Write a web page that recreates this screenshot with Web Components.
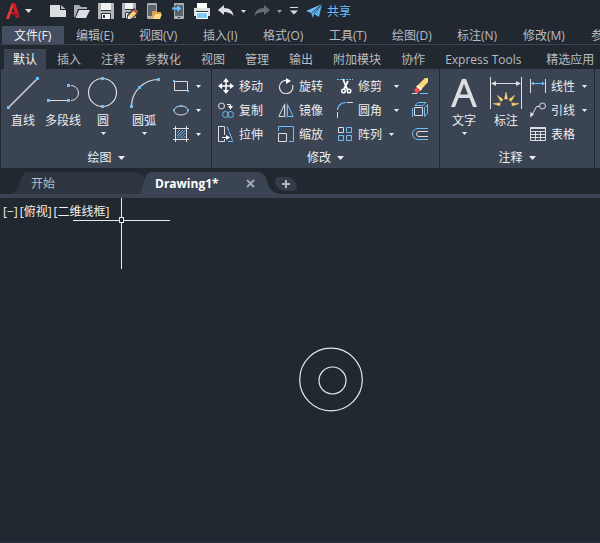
<!DOCTYPE html>
<html lang="zh-CN">
<head>
<meta charset="utf-8">
<title>Drawing1</title>
<style>
html, body { height: 100%; margin: 0; }
body { background: #212830; }
</style>
</head>
<body>
<cad-app></cad-app>
<script>
const W = '#dcdde0', B = '#6cbdf8', Y = '#ffcf70';
const sq = (x, y) => `<rect x="${x - 1.5}" y="${y - 1.5}" width="3" height="3" fill="${B}"/>`;
const ray = (a) => `<path d="M14.500 22L16 15L17.500 22Z" fill="${Y}" stroke="${Y}" stroke-width=".5" transform="rotate(${a} 16 28)"/>`;
const ICONS = {
  logo: [18, 18, `<path d="M2 17L8 1H11L16 15L12 16L11 12H6L5 17Z" fill="#c8202b"/><path d="M9 5L7 10H10.500Z" fill="#212830"/><path d="M2 17L8 1L9 5L5 17Z" fill="#e23b3b"/><path d="M6 12L12 11L16 15L11 14Z" fill="#8f1620"/>`],
  caret: [7, 4, `<path d="M0 0H7L3.500 4Z" fill="currentColor"/>`],
  minicaret: [5, 3, `<path d="M0 0H5L2.500 3Z" fill="currentColor"/>`],
  custom: [8, 8, `<path d="M0 .500H8" stroke="#dcdde0"/><path d="M0 3.500H8L4 7.500Z" fill="#dcdde0"/>`],
  new: [16, 16, `<path d="M0 2H10V7H16V14H0Z" fill="${W}"/><path d="M11 2L15.500 6H11Z" fill="#b5b8bc"/>`],
  open: [16, 16, `<path d="M0 2H5L7 4H13V6H4L1 14H0Z" fill="#a9adb2"/><path d="M5 7H16L12 15H1.500Z" fill="${W}"/>`],
  save: [16, 16, `<path d="M0 0H16V16H0Z" fill="#b1b5ba"/><path d="M3 0H13V7H3ZM4 10H12V16H4Z" fill="#f1f1f2"/><path d="M3 7.500H13M3.500 16V10.500H12.500V16" stroke="#30363e" fill="none"/><path d="M5 12H7V15H5Z" fill="#30363e"/>`],
  saveas: [16, 16, `<path d="M0 0H14V15H0Z" fill="#b1b5ba"/><path d="M3 0H11V6H3ZM3 9H9V15H3Z" fill="#f1f1f2"/><path d="M3 6.500H11M3.500 15V9.500H10" stroke="#30363e" fill="none"/><path d="M12 5L16 8V11L10 16H5V12Z" fill="#30363e"/><path d="M11.500 7.500L14.500 10.500L9.500 15.500L6.500 12.500Z" fill="${Y}"/><path d="M12 7L13.500 6L16 8.500L15 10Z" fill="#ec5a55"/><path d="M6.500 12.500L9.500 15.500L5.500 16Z" fill="#fff"/>`],
  mobileopen: [16, 16, `<rect x="1" y="0" width="10" height="16" rx="1" fill="#aeb2b7"/><path d="M2 2H10V13H2Z" fill="#5e656e"/><path d="M6 8H10L11 9H15V11H9L7 16H6Z" fill="#d8a648"/><path d="M9 11H16L14 16H6.500Z" fill="#ffda89"/>`],
  mobilesave: [16, 16, `<rect x="4" y="0" width="10" height="16" rx="1" fill="#aeb2b7"/><path d="M5 2H13V13H5Z" fill="#5e656e"/><path d="M8 14.500H10" stroke="#30363e"/><path d="M2 4H7V1L12 5.500L7 10V7H2Z" fill="${B}" stroke="#212830" stroke-width=".5"/>`],
  print: [16, 16, `<path d="M3 0H13V5H3Z" fill="#fff"/><path d="M0 5H16V13H0Z" fill="#dfe0e2"/><path d="M0 4.500H3M13 4.500H16M2 8.500H14" stroke="#30363e"/><path d="M2.500 9.500H13.500V15.500H2.500Z" fill="#84c8fa" stroke="#fff"/>`],
  undo: [16, 12, `<path d="M0 5L6 0V3C12 3 15 6 15.500 11C13 8 10 7 6 7V10Z" fill="currentColor"/>`],
  redo: [16, 12, `<path d="M16 5L10 0V3C4 3 1 6 .500 11C3 8 6 7 10 7V10Z" fill="currentColor"/>`],
  share: [16, 16, `<path d="M0 8L16 1L5.500 10Z" fill="${B}"/><path d="M16 1L13 14L8 11L7 15L5 10Z" fill="#5fb2ee"/><path d="M5.500 10L15.500 1.500L8 11" fill="none" stroke="#212830" stroke-width=".7"/>`],
  line: [32, 32, `<path d="M2 30L30 2" stroke="${W}" stroke-width="1.200"/>${sq(1.5, 30.5)}${sq(30.5, 1.5)}`],
  pline: [32, 32, `<path d="M3 23.500H20M24 23.500A7.500 7.500 0 0 0 24 8.500" stroke="${W}" fill="none"/>${sq(1.5, 23.5)}${sq(21.5, 23.5)}${sq(21.5, 8.5)}`],
  circle: [32, 32, `<circle cx="15.500" cy="15.500" r="14" stroke="${W}" fill="none" stroke-width="1.200"/>${sq(15.5, 1.5)}${sq(15.5, 29.5)}`],
  arc: [32, 32, `<path d="M3.500 29.500A27 27 0 0 1 30.500 2.500" stroke="${W}" fill="none" stroke-width="1.200"/>${sq(3.5, 29.5)}${sq(11.5, 10.5)}${sq(30.5, 2.5)}`],
  text: [32, 32, `<path d="M3 30L14 2H18L29 30H25L21.500 21H10.500L7 30ZM12 17.500H20L16 7Z" fill="${W}" fill-rule="evenodd"/>`],
  dim: [32, 32, `<path d="M.500 0V32M31.500 0V32M2 6.500H30" stroke="${W}"/><path d="M1 6.500L6 4V9ZM31 6.500L26 4V9Z" fill="${W}"/><g>${ray(0)}${ray(-42)}${ray(42)}${ray(-84)}${ray(84)}</g>`],
  rect: [16, 16, `<path d="M1.500 3.500H14.500V12.500H1.500Z" stroke="${W}" fill="none"/><path d="M0 2H2V4H0ZM14 12H16V14H14Z" fill="${B}"/>`],
  ellipse: [16, 16, `<ellipse cx="8" cy="8.500" rx="7" ry="4.500" stroke="${W}" fill="none"/><path d="M0 7H2V9H0ZM14 7H16V9H14ZM7 3H9V5H7Z" fill="${B}"/>`],
  hatch: [16, 16, `<path d="M0 2.500H16M0 13.500H16M2.500 0V16M13.500 0V16" stroke="${W}"/><path d="M4 7L7 4M4 10L10 4M4 12.500L12.500 4M7 12.500L12.500 7M10 12.500L12.500 10" stroke="${B}"/>`],
  move: [16, 16, `<path d="M8 2V14M2 8H14" stroke="#fff" stroke-width="1.500"/><path d="M8 0L11 4H5ZM8 16L5 12H11ZM0 8L4 5V11ZM16 8L12 11V5Z" fill="#fff"/>`],
  copy: [16, 16, `<circle cx="3.500" cy="4" r="3" stroke="${W}" fill="none"/><path d="M9 2.500H12.500V5" stroke="#fff" fill="none"/><path d="M10 4H15L12.500 7.500Z" fill="#fff"/><circle cx="7.500" cy="12.500" r="3" stroke="${B}" fill="none"/><circle cx="12.500" cy="12.500" r="3" stroke="${B}" fill="none"/>`],
  stretch: [16, 16, `<path d="M6.500 9V.500H.500V15.500H6.500V13" stroke="${W}" fill="none"/><path d="M9 .500L15 15.500H9" stroke="${B}" fill="none" stroke-dasharray="5 1 9 1"/><path d="M4 11.500H9" stroke="#fff"/><path d="M8 9L12 11.500L8 14Z" fill="#fff"/>`],
  rotate: [16, 16, `<path d="M10 2.600A6.700 6.700 0 1 0 14.500 7" stroke="${W}" fill="none" stroke-width="1.200"/><path d="M8 0L13 3L8 6Z" fill="#fff"/>`],
  mirror: [16, 16, `<path d="M6.500 2.500V14.500H.800Z" stroke="${W}" fill="none"/><path d="M9.500 2.500V14.500H15.200Z" stroke="${B}" fill="none"/><path d="M8 1V16" stroke="${B}" stroke-width=".6"/>`],
  scale: [16, 16, `<path d="M.500 5V.500H15.500V15.500H11" stroke="${B}" fill="none"/><path d="M.500 7.500H8.500V15.500H.500Z" stroke="${W}" fill="none"/>`],
  trim: [16, 16, `<path d="M0 1.500H16" stroke="${B}" stroke-dasharray="2 1"/><path d="M6 1L10 11M11 3L7 11" stroke="#fff" stroke-width="1.800"/><circle cx="6.500" cy="13" r="1.800" stroke="#fff" fill="none" stroke-width="1.500"/><circle cx="12" cy="13" r="1.800" stroke="#fff" fill="none" stroke-width="1.500"/><path d="M9 9L11 12" stroke="#fff" stroke-width="1.500"/>`],
  fillet: [16, 16, `<path d="M.500 8C.500 4 4 .500 9 .500" stroke="${B}" fill="none" stroke-width="1.200"/><path d="M10 .500H16M.500 10V16" stroke="${W}"/>`],
  array: [16, 16, `<path d="M1.500 1.500H6.500V6.500H1.500Z" stroke="${W}" fill="none"/><path d="M9.500 1.500H14.500V6.500H9.500ZM1.500 9.500H6.500V14.500H1.500ZM9.500 9.500H14.500V14.500H9.500Z" stroke="${B}" fill="none"/>`],
  erase: [16, 16, `<path d="M13 0H16V4L8 13L4 9Z" fill="#ffd779"/><path d="M6 7L10 11L8.500 12.500L4.500 8.500Z" fill="#fff"/><path d="M5 9L8 12L6 15H4L2 12Z" fill="#ee4e4e"/><path d="M0 15.500H5" stroke="${W}"/><path d="M8 15.500H16" stroke="${B}"/>`],
  explode: [16, 16, `<path d="M2.500 5.500H10.500V13.500H2.500Z" stroke="${W}" fill="none"/><path d="M.500 6V15M3 3.500L6 .500H14L11 3.500ZM12.500 5.500L15.500 2.500V11L12.500 14.500Z" stroke="${B}" fill="none"/>`],
  offset: [16, 16, `<path d="M16 2.500H6A5.500 5.500 0 0 0 6 13.500H16" stroke="${B}" fill="none"/><path d="M16 5.500H7A2.500 2.500 0 0 0 7 10.500H16" stroke="${W}" fill="none"/>`],
  linear: [16, 16, `<path d="M.500 1V15M15.500 1V15" stroke="${W}"/><path d="M2 5.500H14" stroke="${B}"/><path d="M1 5.500L4 3.500V7.500ZM15 5.500L12 3.500V7.500Z" fill="${B}"/>`],
  leader: [16, 16, `<circle cx="12.500" cy="4" r="3" stroke="${W}" fill="none"/><path d="M9.500 4.500H6.500L2 13" stroke="${W}" fill="none"/><path d="M0 15.500L.500 10L4 12.500Z" fill="${W}"/>`],
  table: [16, 16, `<path d="M.500 1.500H15.500V14.500H.500ZM0 2.500H16M0 5.500H16M0 8.500H16M0 11.500H16M5.500 5V15M10.500 5V15" stroke="${W}" fill="none"/>`],
  close: [9, 9, `<path d="M1 1L8 8M8 1L1 8" stroke="#a4a9b0" stroke-width="2"/>`],
  plus: [8, 8, `<path d="M4 0V8M0 4H8" stroke="#b4b8be" stroke-width="2"/>`]
};

const RESET = `
  button { font: inherit; color: inherit; background: none; border: 0; padding: 0; margin: 0; white-space: nowrap; }
  :host { box-sizing: border-box; }`;

class CadElement extends HTMLElement {
  constructor() { super(); this.attachShadow({ mode: 'open' }); }
  connectedCallback() {
    this.shadowRoot.innerHTML = `<style>${RESET}${this.styles()}</style>${this.markup()}`;
  }
}
const define = (name, styles, markup) => customElements.define(name, class extends CadElement {
  styles() { return styles; }
  markup() { return markup.call(this); }
});

define('cad-icon', `:host { display: block; flex: none; } svg { display: block; }`, function () {
  const [w, h, body] = ICONS[this.getAttribute('name')];
  return `<svg width="${w}" height="${h}" viewBox="0 0 ${w} ${h}" aria-hidden="true">${body}</svg>`;
});

define('cad-quick-access', `
  :host { display: flex; align-items: center; height: 24px; padding: 0 4px 2px 4px; color: #dcdde0; }
  button { display: flex; align-items: center; justify-content: center; height: 20px; width: 24px; flex: none; }
  .app { width: 42px; justify-content: flex-start; gap: 3px; }
  .drop { width: 10px; }
  .drop + button { margin-left: 2px; }
  .dim { color: #666c74; }
  .mid { color: #9a9fa6; }
  .custom { width: 16px; }
  .share { width: auto; gap: 5px; margin-left: 4px; color: #6cbdf8; }`, () => {
  const b = (icon, label, cls = '') => `<button class="${cls}" aria-label="${label}"><cad-icon name="${icon}"></cad-icon></button>`;
  return `<button class="app" aria-label="应用程序菜单"><cad-icon name="logo"></cad-icon><cad-icon name="caret"></cad-icon></button>` +
    b('new', '新建') + b('open', '打开') + b('save', '保存') + b('saveas', '另存为') + b('mobileopen', '从移动设备打开') +
    b('mobilesave', '保存到移动设备') + b('print', '打印') + b('undo', '放弃') + b('minicaret', '放弃列表', 'drop') +
    b('redo', '重做', 'dim') + b('minicaret', '重做列表', 'drop mid') + b('custom', '自定义', 'custom') +
    `<button class="share"><cad-icon name="share"></cad-icon>共享</button>`;
});

define('cad-menu-bar', `
  :host { display: grid; grid-template-columns: 62px 63px 64px 60px 66px 63px 65px 66px 68px auto; justify-content: start; padding: 2px 0 0 2px; color: #b9bcc1; border-bottom: 1px solid #3b4453; overflow: hidden; }
  button { height: 18px; line-height: 17px; padding: 1px 0 0 12px; text-align: left; }
  .on { background: #444e60; color: #f2f3f5; }`, () =>
  ['文件(F)', '编辑(E)', '视图(V)', '插入(I)', '格式(O)', '工具(T)', '绘图(D)', '标注(N)', '修改(M)', '参数(P)']
    .map((t, i) => `<button class="${i ? '' : 'on'}">${t}</button>`).join(''));

define('cad-ribbon-tabs', `
  :host { display: flex; padding: 4px 0 0 4px; gap: 2px; color: #b9bcc1; overflow: hidden; }
  button { flex: none; height: 20px; line-height: 18px; padding: 2px 9px 0; }
  .wide { width: 99px; text-align: left; }
  .on { background: #3b4453; color: #f2f3f5; }`, () =>
  ['默认', '插入', '注释', '参数化', '视图', '管理', '输出', '附加模块', '协作', 'Express Tools', '精选应用']
    .map((t, i) => `<button class="${i ? (i === 9 ? 'wide' : '') : 'on'}">${t}</button>`).join(''));

define('cad-panel', `
  :host { display: flex; flex-direction: column; flex: none; background: #3b4453; border-right: 1px solid #212830; color: #eceef0; }
  .body { display: flex; padding: 5px 3px 0 var(--lead, 3px); height: 79px; box-sizing: border-box; }
  .title { display: flex; align-items: center; justify-content: center; gap: 6px; height: 20px; line-height: 20px; }`, function () {
  return `<div class="body"><slot></slot></div><button class="title">${this.getAttribute('label')}<cad-icon name="caret"></cad-icon></button>`;
});

define('cad-big-tool', `
  :host { display: block; flex: none; width: 40px; }
  :host([wide]) { width: 42px; }
  button { display: flex; flex-direction: column; align-items: center; width: 100%; padding-top: 3px; }
  span { line-height: 16px; margin: 4px 0 3px; }`, function () {
  return `<button><cad-icon name="${this.getAttribute('icon')}"></cad-icon><span><slot></slot></span>${this.hasAttribute('menu') ? '<cad-icon name="minicaret"></cad-icon>' : ''}</button>`;
});

define('cad-tool', `
  :host { display: block; }
  button { display: flex; align-items: center; height: 24px; }
  .label { margin-left: 5px; line-height: 22px; padding-top: 2px; }
  .drop { padding: 0 4px; margin-left: 3px; }
  .label + .drop { margin-left: 8px; }
  .label + .drop.near { margin-left: 3px; }`, function () {
  const label = this.textContent ? '<span class="label"><slot></slot></span>' : '';
  const m = this.getAttribute('menu');
  const drop = m === null ? '' : `<span class="drop ${m}"><cad-icon name="minicaret"></cad-icon></span>`;
  return `<button aria-label="${this.textContent || this.getAttribute('icon')}"><cad-icon name="${this.getAttribute('icon')}"></cad-icon>${label}${drop}</button>`;
});

define('cad-tool-grid', `
  :host { display: grid; grid-auto-flow: column; grid-template-rows: repeat(3, 24px); align-content: start; padding-left: 3px; }
  :host([four]) { grid-template-columns: 60px 59px 75px 24px; }`, () => `<slot></slot>`);

define('cad-ribbon', `
  :host { display: flex; overflow: hidden; border-left: 1px solid #212830; }
  cad-panel.draw { width: 211px; --lead: 2px; }
  cad-panel.modify { width: 228px; }
  cad-panel.note { width: 155px; }
  cad-tool-grid.lead { padding-left: 8px; }
  .rest { flex: 1; background: #3b4453; }`, () => `
  <cad-panel class="draw" label="绘图">
    <cad-big-tool icon="line">直线</cad-big-tool>
    <cad-big-tool icon="pline">多段线</cad-big-tool>
    <cad-big-tool icon="circle" menu>圆</cad-big-tool>
    <cad-big-tool icon="arc" menu wide>圆弧</cad-big-tool>
    <cad-tool-grid class="lead"><cad-tool icon="rect" menu></cad-tool><cad-tool icon="ellipse" menu></cad-tool><cad-tool icon="hatch" menu></cad-tool></cad-tool-grid>
  </cad-panel>
  <cad-panel class="modify" label="修改">
    <cad-tool-grid four>
      <cad-tool icon="move">移动</cad-tool><cad-tool icon="copy">复制</cad-tool><cad-tool icon="stretch">拉伸</cad-tool>
      <cad-tool icon="rotate">旋转</cad-tool><cad-tool icon="mirror">镜像</cad-tool><cad-tool icon="scale">缩放</cad-tool>
      <cad-tool icon="trim" menu>修剪</cad-tool><cad-tool icon="fillet" menu>圆角</cad-tool><cad-tool icon="array" menu="near">阵列</cad-tool>
      <cad-tool icon="erase"></cad-tool><cad-tool icon="explode"></cad-tool><cad-tool icon="offset"></cad-tool>
    </cad-tool-grid>
  </cad-panel>
  <cad-panel class="note" label="注释">
    <cad-big-tool icon="text" menu wide>文字</cad-big-tool>
    <cad-big-tool icon="dim" wide>标注</cad-big-tool>
    <cad-tool-grid><cad-tool icon="linear" menu="near">线性</cad-tool><cad-tool icon="leader" menu="near">引线</cad-tool><cad-tool icon="table">表格</cad-tool></cad-tool-grid>
  </cad-panel>
  <div class="rest"></div>`);

define('cad-file-tabs', `
  :host { display: flex; align-items: flex-end; height: 30px; border-bottom: 4px solid #3b4453; padding-left: 12px; color: #b9bcc1; }
  .tab { position: relative; display: flex; align-items: center; justify-content: space-between; height: 22px; width: 132px; box-sizing: border-box; padding: 1px 20px 0 19px; }
  .tab svg { position: absolute; inset: 0 0 0 -3px; width: 144px; height: 22px; }
  .tab button { position: relative; line-height: 21px; }
  .on { color: #fff; font-weight: 700; padding: 1px 13px 0 11px; width: 124px; }
  .add { display: flex; align-items: center; justify-content: center; width: 22px; height: 14px; margin: 0 0 3px 7px; background: #343c49; border-radius: 4px 10px 4px 10px; }`, () => `
  <div class="tab"><svg viewBox="0 0 144 22" aria-hidden="true"><path d="M0 22C8 21 9 17 11 10C13 3 15 0 20 0H126C133 0 135 4 137 11C138 16 140 22 144 22Z" fill="#2d3541"/></svg><button>开始</button></div>
  <div class="tab on"><svg viewBox="0 0 144 22" aria-hidden="true"><path d="M0 22C1 17 2 11 4 6C6 1 8 0 13 0H116C122 0 124 3 126 9C128 16 130 21 140 22Z" fill="#3b4453"/></svg><button>Drawing1*</button><button aria-label="关闭"><cad-icon name="close"></cad-icon></button></div>
  <button class="add" aria-label="新图形"><cad-icon name="plus"></cad-icon></button>`);

define('cad-viewport', `
  :host { display: block; position: relative; flex: 1; overflow: hidden; color: #eff0f1; border-bottom: 1px solid #2b2f3d; }
  .controls { display: flex; gap: 2px; padding: 4px 3px; line-height: 20px; }
  svg { position: absolute; inset: 0; width: 100%; height: 100%; pointer-events: none; }`, () => `
  <div class="controls"><button>[−]</button><button>[俯视]</button><button>[二维线框]</button></div>
  <svg fill="none" stroke="#e8e9ea" aria-hidden="true">
    <path d="M121.500 0V19M121.500 25V71M73 22.500H119M124 22.500H170"/>
    <rect x="119.500" y="19.500" width="4" height="5"/>
    <circle cx="331" cy="181.500" r="31.300" stroke-width="1.200"/>
    <circle cx="332.500" cy="182.500" r="13.500" stroke-width="1.200"/>
  </svg>`);

define('cad-app', `
  :host { display: flex; flex-direction: column; min-height: 100vh; background: #212830; overflow: hidden; font: 12px "Open Sans", "Noto Sans CJK SC", sans-serif; }`, () => `
  <cad-quick-access></cad-quick-access>
  <cad-menu-bar></cad-menu-bar>
  <cad-ribbon-tabs></cad-ribbon-tabs>
  <cad-ribbon></cad-ribbon>
  <cad-file-tabs></cad-file-tabs>
  <cad-viewport></cad-viewport>`);
</script>
</body>
</html>
